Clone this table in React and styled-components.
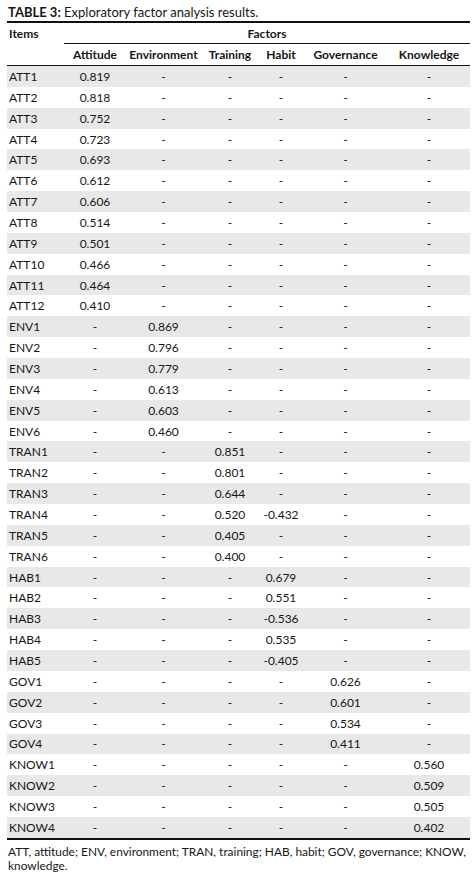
import React from "react";
import styled, { createGlobalStyle } from "styled-components";

const Global = createGlobalStyle`
  html, body { margin: 0; padding: 0; background: #fff; }
  body { font-family: Lato, "Open Sans", "Liberation Sans", sans-serif; color: #161616; }
`;

const Page = styled.div`
  width: 463px;
  padding: 5px 6px 0 7px;
`;

const Title = styled.div`
  font-size: 13px;
  line-height: 15px;
  padding-left: 1px;
  padding-bottom: 1px;
  border-bottom: 2px solid #111;
  b { font-weight: 700; }
`;

const Table = styled.table`
  width: 463px;
  border-collapse: collapse;
  table-layout: fixed;
  font-size: 12px;
  border-bottom: 2px solid #111;
`;

const HeadCell = styled.th`
  font-weight: 700;
  height: ${(p) => p.$h || 21}px;
  padding: 0;
  text-align: ${(p) => (p.$left ? "left" : "center")};
  padding-left: ${(p) => (p.$left ? "2px" : "0")};
  vertical-align: middle;
  border-bottom: ${(p) => (p.$line ? "1px solid #111" : "none")};
`;

const Row = styled.tr`
  background: ${(p) => (p.$shade ? "#e8e8e8" : "#fff")};
`;

const Cell = styled.td`
  height: 20.86px;
  padding: 0;
  text-align: ${(p) => (p.$left ? "left" : "center")};
  padding-left: ${(p) => (p.$left ? "2px" : "0")};
  vertical-align: middle;
  white-space: nowrap;
`;

const Note = styled.div`
  font-size: 11.9px;
  line-height: 14px;
  padding: 5px 0 0 1px;
`;

const widths = [57, 62, 75, 58, 44, 85, 82];
const factors = ["Attitude", "Environment", "Training", "Habit", "Governance", "Knowledge"];

const data = [
  ["ATT1", 0, "0.819"], ["ATT2", 0, "0.818"], ["ATT3", 0, "0.752"], ["ATT4", 0, "0.723"],
  ["ATT5", 0, "0.693"], ["ATT6", 0, "0.612"], ["ATT7", 0, "0.606"], ["ATT8", 0, "0.514"],
  ["ATT9", 0, "0.501"], ["ATT10", 0, "0.466"], ["ATT11", 0, "0.464"], ["ATT12", 0, "0.410"],
  ["ENV1", 1, "0.869"], ["ENV2", 1, "0.796"], ["ENV3", 1, "0.779"], ["ENV4", 1, "0.613"],
  ["ENV5", 1, "0.603"], ["ENV6", 1, "0.460"],
  ["TRAN1", 2, "0.851"], ["TRAN2", 2, "0.801"], ["TRAN3", 2, "0.644"], ["TRAN4", 2, "0.520", { 3: "-0.432" }],
  ["TRAN5", 2, "0.405"], ["TRAN6", 2, "0.400"],
  ["HAB1", 3, "0.679"], ["HAB2", 3, "0.551"], ["HAB3", 3, "-0.536"], ["HAB4", 3, "0.535"], ["HAB5", 3, "-0.405"],
  ["GOV1", 4, "0.626"], ["GOV2", 4, "0.601"], ["GOV3", 4, "0.534"], ["GOV4", 4, "0.411"],
  ["KNOW1", 5, "0.560"], ["KNOW2", 5, "0.509"], ["KNOW3", 5, "0.505"], ["KNOW4", 5, "0.402"],
];

export default function App() {
  return (
    <Page>
      <Global />
      <Title>
        <b>TABLE 3:</b> Exploratory factor analysis results.
      </Title>
      <Table>
        <colgroup>
          {widths.map((w, i) => (
            <col key={i} style={{ width: w }} />
          ))}
        </colgroup>
        <thead>
          <tr>
            <HeadCell $left $h={20}>Items</HeadCell>
            <HeadCell colSpan={6} $line $h={20}>Factors</HeadCell>
          </tr>
          <tr>
            <HeadCell $h={21} $line />
            {factors.map((f) => (
              <HeadCell key={f} $h={21} $line>{f}</HeadCell>
            ))}
          </tr>
        </thead>
        <tbody>
          {data.map(([name, col, val, extra], i) => (
            <Row key={name} $shade={i % 2 === 0}>
              <Cell $left>{name}</Cell>
              {factors.map((f, j) => (
                <Cell key={f}>{j === col ? val : extra && extra[j] ? extra[j] : "-"}</Cell>
              ))}
            </Row>
          ))}
        </tbody>
      </Table>
      <Note>
        ATT, attitude; ENV, environment; TRAN, training; HAB, habit; GOV, governance; KNOW,
        <br />
        knowledge.
      </Note>
    </Page>
  );
}
